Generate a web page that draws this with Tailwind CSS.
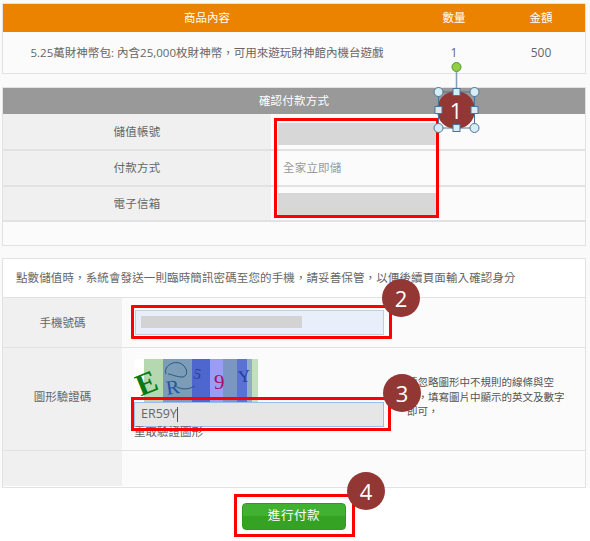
<!DOCTYPE html>
<html lang="zh-Hant">
<head>
  <meta charset="UTF-8" />
  <title>確認付款方式</title>
  <script src="https://cdn.jsdelivr.net/npm/@tailwindcss/browser@4"></script>
</head>
<body class="bg-[#fafafa]">
  <div class="relative w-[590px] h-[541px] overflow-hidden font-['Open_Sans','Noto_Sans_CJK_TC',sans-serif] text-[11.5px] text-[#666]">
    <div class="flex flex-col h-full pl-[2px] pt-[3px] w-[586px]">

      <!-- order items -->
      <div class="border border-[#e2e2e2] h-[71px] bg-[#fbfbfb]">
        <div class="grid grid-cols-[408px_86px_88px] items-center h-[28px] bg-[#eb8200] text-white text-center">
          <div>商品內容</div><div>數量</div><div>金額</div>
        </div>
        <div class="grid grid-cols-[408px_86px_88px] items-center h-[41px] text-center text-[12px]">
          <div class="text-[11.5px] tracking-[0.03px]">5.25萬財神幣包: 內含25,000枚財神幣，可用來遊玩財神館內機台遊戲</div><div>1</div><div>500</div>
        </div>
      </div>

      <!-- payment summary -->
      <div class="mt-[13px] border border-[#e2e2e2] h-[159px] bg-[#fbfbfb]">
        <div class="flex items-center justify-center h-[26px] bg-[#999] text-white tracking-[0.2px]">確認付款方式</div>
        <div class="grid grid-cols-[268px_1fr] h-[37px] border-b-2 border-[#e2e2e2]">
          <div class="flex items-center justify-center bg-[#f0f0f0] tracking-[0.2px]">儲值帳號</div>
          <div class="pl-[7px] pt-[9px]"><div class="w-[159px] h-[22px] bg-[#d7d7d7]"></div></div>
        </div>
        <div class="grid grid-cols-[268px_1fr] h-[36px] border-b-2 border-[#e2e2e2]">
          <div class="flex items-center justify-center bg-[#f0f0f0] tracking-[0.2px]">付款方式</div>
          <div class="flex items-center pl-[12px] text-[#999] tracking-[0.2px]">全家立即儲</div>
        </div>
        <div class="grid grid-cols-[268px_1fr] h-[35px] border-b-2 border-[#e2e2e2]">
          <div class="flex items-center justify-center bg-[#f0f0f0] tracking-[0.2px]">電子信箱</div>
          <div class="pl-[7px] pt-[6px]"><div class="w-[159px] h-[24px] bg-[#d7d7d7]"></div></div>
        </div>
      </div>

      <!-- verification -->
      <div class="mt-[12px] border border-[#e2e2e2] h-[230px] bg-white">
        <div class="flex items-center h-[39px] pl-[13px] border-b border-[#e2e2e2] tracking-[0.12px]">點數儲值時，系統會發送一則臨時簡訊密碼至您的手機，請妥善保管，以便後續頁面輸入確認身分</div>
        <div class="grid grid-cols-[119px_1fr] h-[50px] border-b border-[#e2e2e2]">
          <div class="flex items-center justify-center bg-[#f0f0f0]">手機號碼</div>
          <div class="pl-[13px] pt-[12px] bg-[#fbfbfb]">
            <div class="w-[249px] h-[25px] pl-[5px] pt-[5px] border border-[#c5cdd9] bg-[#e8effa]">
              <div class="w-[161px] h-[12px] bg-[#d3d3d3]"></div>
            </div>
          </div>
        </div>
        <div class="grid grid-cols-[119px_1fr] h-[103px] border-b border-[#e2e2e2]">
          <div class="flex items-center justify-center bg-[#f0f0f0] pb-[4px]">圖形驗證碼</div>
          <div class="flex pl-[12px] pt-[11px] bg-[#fbfbfb]">
            <div class="w-[250px]">
              <svg class="block" width="124" height="43" viewBox="0 0 124 43">
                <rect width="124" height="43" fill="#fff"/>
                <rect x="10" width="19" height="43" fill="#b5d8b0"/>
                <rect x="29" width="29" height="43" fill="#7c9cb8"/>
                <rect x="58" width="18" height="43" fill="#4d67cf"/>
                <rect x="76" width="13" height="43" fill="#9a9cf5"/>
                <rect x="89" width="14" height="43" fill="#7b95c4"/>
                <rect x="103" width="10" height="43" fill="#5a72d6"/>
                <rect x="113" width="5" height="43" fill="#8fb0c4"/>
                <rect x="118" width="6" height="43" fill="#c3dfc0"/>
                <path d="M32 15c-3-9 10-15 17-9 6 5 4 13-2 12-7-1-11-3-13-3M40 26c6 5 14 5 21 1" fill="none" stroke="#27597f" stroke-width="1"/>
                <text x="3" y="34" transform="rotate(-22 14 26)" font-family="Liberation Serif" font-size="31" font-weight="700" fill="#0a7a14">E</text>
                <text x="32" y="35" transform="rotate(-8 38 28)" font-family="Liberation Serif" font-size="20" fill="#1f56a8">R</text>
                <text x="60" y="20" transform="rotate(12 64 14)" font-family="Liberation Serif" font-size="15" fill="#27408c">5</text>
                <text x="80" y="30" font-family="Liberation Serif" font-size="21" fill="#a31069">9</text>
                <text x="104" y="23" transform="rotate(-8 110 17)" font-family="Liberation Serif" font-size="17" fill="#1f40a0">Y</text>
              </svg>
              <div class="w-[250px] h-[25px] flex items-center pl-[6px] border border-[#9dbcec] bg-[#e6e6e6] text-[12.5px] leading-none">ER59Y<span class="w-px h-[15px] bg-[#555]"></span></div>
              <div class="mt-[-2px] text-[11.5px] leading-[14px]">重取驗證圖形</div>
            </div>
            <div class="ml-[23px] mt-[16px] w-[160px] text-[10.5px] leading-[14.5px] text-[#555]">請忽略圖形中不規則的線條與空白，填寫圖片中顯示的英文及數字即可，</div>
          </div>
        </div>
        <div class="grid grid-cols-[119px_1fr] h-[35px]">
          <div class="bg-[#f0f0f0]"></div>
          <div class="bg-[#fbfbfb]"></div>
        </div>
      </div>

      <div class="flex-1 flex justify-center ml-[-2px] w-[590px] pr-[2px] pt-[15px] bg-white">
        <button class="w-[104px] h-[27px] rounded-[4px] border border-[#2f9a20] bg-[linear-gradient(#41b131_50%,#35a223_50%)] text-white text-[12.5px] tracking-[0.6px]">進行付款</button>
      </div>
    </div>

    <!-- red callout boxes -->
    <div class="absolute left-[274px] top-[118px] w-[165px] h-[100px] border-[3px] border-[#f00]"></div>
    <div class="absolute left-[131px] top-[305px] w-[261px] h-[34px] border-[3px] border-[#f00] rounded-[1px]"></div>
    <div class="absolute left-[131px] top-[397px] w-[260px] h-[34px] border-[3px] border-[#f00]"></div>
    <div class="absolute left-[234px] top-[494px] w-[121px] h-[43px] border-[3px] border-[#f00]"></div>

    <!-- numbered badges -->
    <div class="absolute left-[437px] top-[91px] w-[38px] h-[38px] rounded-full bg-[#933735] flex items-center justify-center text-white text-[22px] leading-none">1</div>
    <div class="absolute left-[382px] top-[279px] w-[38px] h-[38px] rounded-full bg-[#933735] flex items-center justify-center text-white text-[22px] leading-none">2</div>
    <div class="absolute left-[383px] top-[374px] w-[38px] h-[38px] rounded-full bg-[#933735] flex items-center justify-center text-white text-[22px] leading-none">3</div>
    <div class="absolute left-[347px] top-[472px] w-[38px] h-[38px] rounded-full bg-[#933735] flex items-center justify-center text-white text-[22px] leading-none">4</div>

    <!-- shape selection handles on badge 1 -->
    <svg class="absolute left-[430px] top-[60px]" width="54" height="76" viewBox="0 0 54 76">
      <path d="M26.5 12V32" stroke="#7f9db9" stroke-width="1.5"/>
      <rect x="8.5" y="32" width="36" height="36" fill="none" stroke="#4f7396"/>
      <circle cx="26.5" cy="7" r="4.5" fill="#8fd13f" stroke="#5c8f3a"/>
      <g fill="#d6eef3" stroke="#4f7396">
        <circle cx="8.5" cy="32" r="4.5"/><circle cx="44.5" cy="32" r="4.5"/>
        <circle cx="8.5" cy="68" r="4.5"/><circle cx="44.5" cy="68" r="4.5"/>
        <rect x="23" y="28.500" width="7" height="7"/><rect x="23" y="64.500" width="7" height="7"/>
        <rect x="5" y="46.500" width="7" height="7"/><rect x="41" y="46.500" width="7" height="7"/>
      </g>
    </svg>
  </div>
</body>
</html>
